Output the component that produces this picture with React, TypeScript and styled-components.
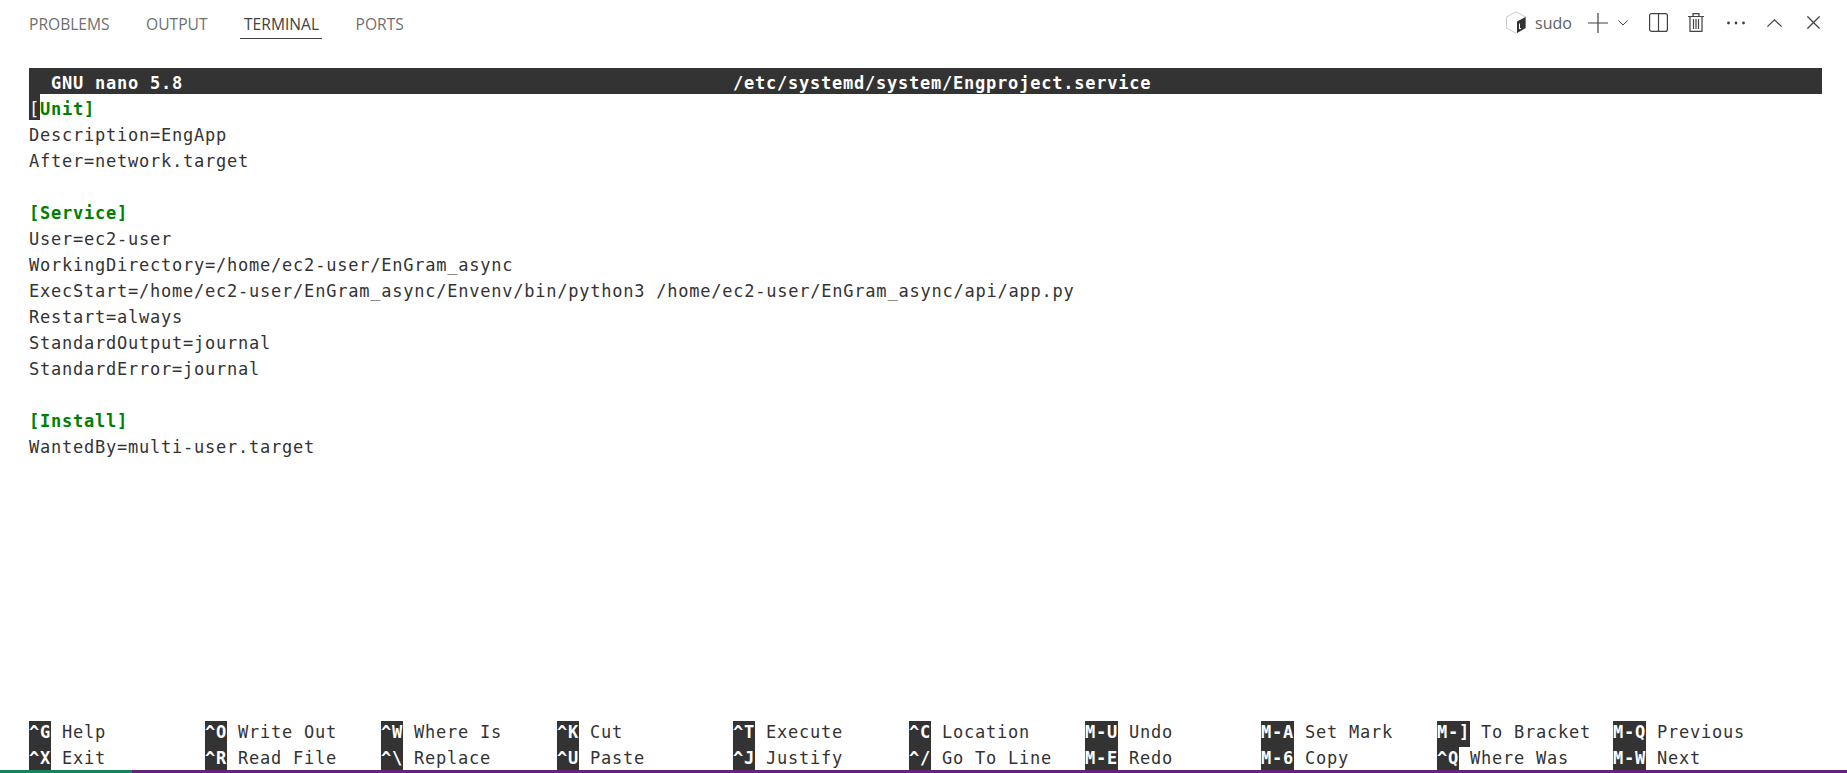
import React from 'react';
import styled, { createGlobalStyle } from 'styled-components';

const GlobalStyle = createGlobalStyle`
  html, body {
    margin: 0;
    padding: 0;
    background: #fff;
    overflow: hidden;
  }
`;

const tabs = ['PROBLEMS', 'OUTPUT', 'TERMINAL', 'PORTS'];

const lines: { text: string; section?: boolean; cursor?: boolean }[] = [
  { text: '[Unit]', section: true, cursor: true },
  { text: 'Description=EngApp' },
  { text: 'After=network.target' },
  { text: '' },
  { text: '[Service]', section: true },
  { text: 'User=ec2-user' },
  { text: 'WorkingDirectory=/home/ec2-user/EnGram_async' },
  { text: 'ExecStart=/home/ec2-user/EnGram_async/Envenv/bin/python3 /home/ec2-user/EnGram_async/api/app.py' },
  { text: 'Restart=always' },
  { text: 'StandardOutput=journal' },
  { text: 'StandardError=journal' },
  { text: '' },
  { text: '[Install]', section: true },
  { text: 'WantedBy=multi-user.target' },
];

const shortcuts: [string, string][] = [
  ['^G', 'Help'], ['^O', 'Write Out'], ['^W', 'Where Is'], ['^K', 'Cut'], ['^T', 'Execute'],
  ['^C', 'Location'], ['M-U', 'Undo'], ['M-A', 'Set Mark'], ['M-]', 'To Bracket'], ['M-Q', 'Previous'],
  ['^X', 'Exit'], ['^R', 'Read File'], ['^\\', 'Replace'], ['^U', 'Paste'], ['^J', 'Justify'],
  ['^/', 'Go To Line'], ['M-E', 'Redo'], ['M-6', 'Copy'], ['^Q', 'Where Was'], ['M-W', 'Next'],
];

function App() {
  return (
    <Page>
      <GlobalStyle />
      <Panel>
        <TabBar>
          <Tabs>
            {tabs.map((tab) => (
              <Tab key={tab} $active={tab === 'TERMINAL'}>{tab}</Tab>
            ))}
          </Tabs>
          <Actions>
            <ShellName>
              <svg width="22" height="23" viewBox="0 0 22 23">
                <path d="M11 .8 20.500 6V17L11 22.200 1.500 17V6Z" fill="#fff" stroke="#cfc8c8" />
                <path d="M12 10.500 20.500 6V17L12 22Z" fill="#333" />
                <path d="M14.500 12.500V17.500M14 17.500H16" stroke="#fff" strokeWidth="1" fill="none" />
              </svg>
              <span>sudo</span>
            </ShellName>
            <IconButton $gap={0}>
              <svg width="20" height="20" viewBox="0 0 20 20" fill="none" stroke="#424242" strokeWidth="1.2">
                <path d="M10 0V20M0 10H20" />
              </svg>
            </IconButton>
            <IconButton $gap={10}>
              <svg width="10" height="6" viewBox="0 0 10 6" fill="none" stroke="#424242" strokeWidth="1">
                <path d="M.4.5 5 5 9.600.5" />
              </svg>
            </IconButton>
            <IconButton $gap={21}>
              <svg width="19" height="19" viewBox="0 0 19 19" fill="none" stroke="#424242" strokeWidth="1.2">
                <rect x=".6" y=".6" width="17.800" height="17.800" rx="2" />
                <path d="M9.500 .6V18.400" />
              </svg>
            </IconButton>
            <IconButton $gap={20}>
              <svg width="16" height="19" viewBox="0 0 16 19" fill="none" stroke="#424242" strokeWidth="1.2">
                <path d="M0 3.500H16M5 3.500V.7H11V3.500M2 3.500V18.300H14V3.500M5.500 6V16M8 6V16M10.500 6V16" />
              </svg>
            </IconButton>
            <IconButton $gap={23}>
              <svg width="18" height="4" viewBox="0 0 18 4" fill="#424242">
                <circle cx="1.500" cy="2" r="1.400" />
                <circle cx="9" cy="2" r="1.400" />
                <circle cx="16.500" cy="2" r="1.400" />
              </svg>
            </IconButton>
            <IconButton $gap={22}>
              <svg width="15" height="8" viewBox="0 0 15 8" fill="none" stroke="#424242" strokeWidth="1.2">
                <path d="M.4 7.600 7.500 .8 14.600 7.600" />
              </svg>
            </IconButton>
            <IconButton $gap={25}>
              <svg width="13" height="13" viewBox="0 0 13 13" fill="none" stroke="#424242" strokeWidth="1.3">
                <path d="M.4.4 12.600 12.600M12.600.4 .4 12.600" />
              </svg>
            </IconButton>
          </Actions>
        </TabBar>
        <Terminal>
          <TitleBar>
            <span>{'  GNU nano 5.8'}</span>
            <span>/etc/systemd/system/Engproject.service</span>
          </TitleBar>
          <Editor>
            {lines.map((line, i) => (
              <Line key={i} $section={line.section}>
                {line.cursor ? (
                  <>
                    <Cursor>{line.text[0]}</Cursor>
                    {line.text.slice(1)}
                  </>
                ) : line.text}
              </Line>
            ))}
          </Editor>
          <Shortcuts>
            {shortcuts.map(([key, label]) => (
              <Shortcut key={key}>
                <Key>{key}</Key> {label}
              </Shortcut>
            ))}
          </Shortcuts>
        </Terminal>
      </Panel>
      <StatusBar>
        <Remote />
        <Rest />
      </StatusBar>
    </Page>
  );
}

const Page = styled.div`
  width: 1847px;
  height: 773px;
  display: flex;
  flex-direction: column;
  background: #fff;
`;
const Panel = styled.div`
  flex: 1;
  min-height: 0;
  overflow: hidden;
`;
const TabBar = styled.div`
  height: 68px;
  box-sizing: border-box;
  padding: 0 27px 0 29px;
  display: flex;
  justify-content: space-between;
  align-items: flex-start;
`;
const Tabs = styled.div`
  display: flex;
  gap: 36.5px;
  padding-top: 14px;
`;
const Tab = styled.div<{ $active?: boolean }>`
  font-family: "Open Sans", sans-serif;
  font-size: 15.6px;
  line-height: 20px;
  height: 25px;
  color: ${(p) => (p.$active ? '#424242' : '#6f6f6f')};
  position: relative;
  &::after {
    content: '';
    display: ${(p) => (p.$active ? 'block' : 'none')};
    position: absolute;
    left: -4px;
    right: -3px;
    bottom: 0;
    height: 1px;
    background: #424242;
  }
`;
const Actions = styled.div`
  display: flex;
  align-items: center;
  height: 45px;
`;
const ShellName = styled.div`
  width: 83px;
  display: flex;
  align-items: center;
  gap: 8px;
  font-family: "Open Sans", sans-serif;
  font-size: 16px;
  color: #616161;
`;
const IconButton = styled.div<{ $gap: number }>`
  display: flex;
  align-items: center;
  margin-left: ${(p) => p.$gap}px;
`;
const Terminal = styled.div`
  margin-left: 29px;
  width: 1793px;
  font-family: "DejaVu Sans Mono", monospace;
  font-size: 17px;
  letter-spacing: 0.77px;
  line-height: 30px;
  color: #333;
  white-space: pre;
`;
const TitleBar = styled.div`
  height: 26px;
  background: #333;
  color: #fff;
  font-weight: bold;
  display: grid;
  grid-template-columns: 704px 1fr;
`;
const Editor = styled.div`
  height: 627px;
`;
const Line = styled.div<{ $section?: boolean }>`
  height: 26px;
  color: ${(p) => (p.$section ? '#008000' : '#333')};
  font-weight: ${(p) => (p.$section ? 'bold' : 'normal')};
`;
const Cursor = styled.span`
  display: inline-block;
  height: 26px;
  background: #333;
  color: #fff;
  font-weight: normal;
  vertical-align: top;
`;
const Shortcuts = styled.div`
  display: grid;
  grid-template-columns: repeat(10, 176px);
`;
const Shortcut = styled.div`
  height: 26px;
  line-height: 23px;
`;
const Key = styled.span`
  display: inline-block;
  height: 26px;
  background: #333;
  color: #fff;
  font-weight: bold;
  vertical-align: top;
`;
const StatusBar = styled.div`
  height: 3px;
  display: flex;
  flex: none;
`;
const Remote = styled.div`
  width: 132px;
  background: #16825d;
`;
const Rest = styled.div`
  flex: 1;
  background: #68217a;
`;

export default App;
